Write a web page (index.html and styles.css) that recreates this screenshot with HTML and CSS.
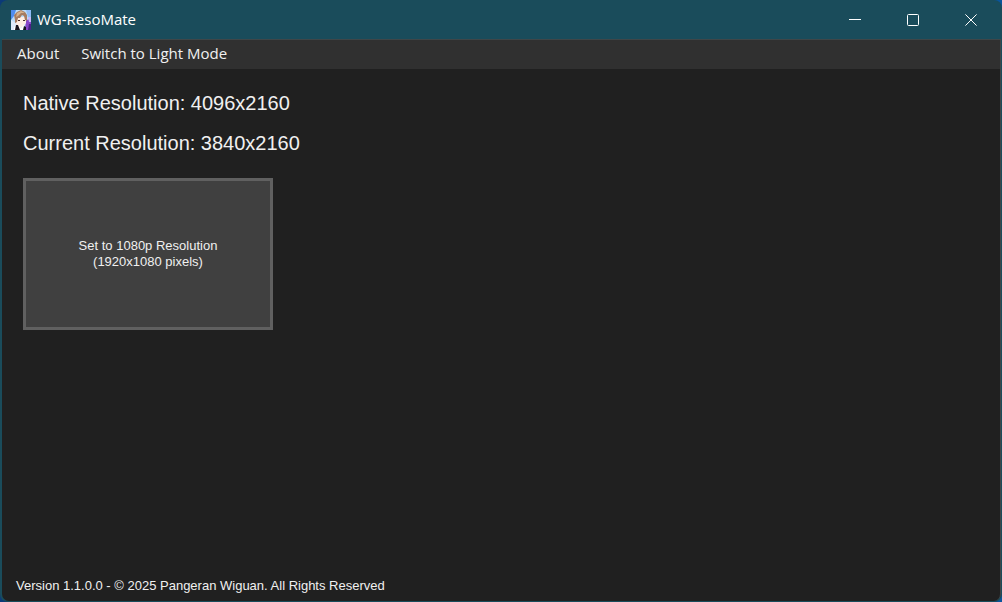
FILE: index.html
```html
<!DOCTYPE html>
<html lang="en">
<head>
<meta charset="utf-8">
<title>WG-ResoMate</title>
<link rel="stylesheet" href="styles.css">
</head>
<body>
<div class="window">
  <header class="titlebar">
    <svg class="app-icon" viewBox="0 0 20 20" aria-hidden="true">
      <rect width="20" height="20" fill="#b9dcfa"/>
      <path d="M0 0h5L3 6 0 10z" fill="#4f8df0"/>
      <path d="M15 0h5v9l-3-2z" fill="#8fbcf7"/>
      <path d="M0 10l5 3v7H0z" fill="#dceafb"/>
      <path d="M15 10l5-1v11h-6z" fill="#8a45c8"/>
      <path d="M17 7h3v5h-2z" fill="#c9b5f6"/>
      <path d="M18 14h2v6h-3z" fill="#4d2387"/>
      <path d="M5 7h10v6l-3 4-4 1-3-4z" fill="#ffeee4"/>
      <path d="M4 10L3 5l3-3 4-2 4 2 2 3v6l-2-1-1-4-2-1-2 3-2 0-1 4-2 1z" fill="#a67c60"/>
      <path d="M6 3l4-2 4 2-4 0-3 3-2 1z" fill="#d4b18d"/>
      <path d="M7 10h2v1H7zM12 10h2v1h-2z" fill="#4b3030"/>
      <path d="M3 17l4-2 3 3 3-3 2 5H3z" fill="#fff"/>
      <path d="M5 15l2 0 2 5H4zM13 16l2 1v3h-3z" fill="#15131d"/>
    </svg>
    <h1 class="title">WG-ResoMate</h1>
    <div class="window-controls">
      <button class="control" type="button" aria-label="Minimize">
        <svg class="glyph" viewBox="0 0 12 12"><path d="M0 5.5h12"/></svg>
      </button>
      <button class="control" type="button" aria-label="Maximize">
        <svg class="glyph" viewBox="0 0 12 12"><rect x=".5" y=".5" width="11" height="11" rx="1"/></svg>
      </button>
      <button class="control" type="button" aria-label="Close">
        <svg class="glyph" viewBox="0 0 12 12"><path d="M.4 .4l11.2 11.2M11.6 .4L.4 11.6"/></svg>
      </button>
    </div>
  </header>
  <div class="client">
    <nav class="menubar">
      <button class="menu-item" type="button">About</button>
      <button class="menu-item" type="button">Switch to Light Mode</button>
    </nav>
    <main class="content">
      <p class="resolution">Native Resolution: 4096x2160</p>
      <p class="resolution">Current Resolution: 3840x2160</p>
      <button class="set-button" type="button">Set to 1080p Resolution<br>(1920x1080 pixels)</button>
    </main>
    <footer class="status">Version 1.1.0.0 - © 2025 Pangeran Wiguan. All Rights Reserved</footer>
  </div>
</div>
</body>
</html>
```
FILE: styles.css
```css
* {
  box-sizing: border-box;
}

body {
  margin: 0;
  background: linear-gradient(90deg, #0b3a78, #0a559c);
  color: #f0f0f0;
  font-family: "Liberation Sans", Arial, sans-serif;
}

button {
  margin: 0;
  padding: 0;
  border: 0;
  background: none;
  color: inherit;
  font: inherit;
}

.window {
  display: flex;
  flex-direction: column;
  min-height: 100vh;
  padding: 0 1px 1px 2px;
  border-radius: 8px;
  overflow: hidden;
  background: #1a4c5b;
}

.titlebar {
  display: flex;
  align-items: center;
  height: 39px;
  padding-left: 9px;
  color: #fff;
}

.app-icon {
  width: 20px;
  height: 20px;
  margin-right: 6px;
}

.title {
  margin: 0;
  padding-bottom: 2px;
  font: 400 15px/20px "Open Sans", "Noto Sans", sans-serif;
}

.window-controls {
  display: flex;
  align-self: stretch;
  margin-left: auto;
  padding-right: 1px;
}

.control {
  display: flex;
  align-items: center;
  justify-content: center;
  width: 58px;
}

.glyph {
  width: 12px;
  height: 12px;
  fill: none;
  stroke: #fff;
  stroke-width: 1;
}

.client {
  display: flex;
  flex: 1;
  flex-direction: column;
  border-top: 1px solid #3f4648;
  border-right: 1px solid #3f4648;
  border-radius: 0 0 7px 7px;
  background: #202020;
}

.menubar {
  display: flex;
  align-items: flex-start;
  gap: 22px;
  height: 29px;
  padding: 0 15px;
  background: #303030;
  font: 15px/26px "Open Sans", "Noto Sans", sans-serif;
}

.content {
  display: flex;
  flex: 1;
  flex-direction: column;
  align-items: flex-start;
  padding: 22px 21px;
}

.resolution {
  margin: 0 0 16px;
  font-size: 20px;
  line-height: 24px;
}

.set-button {
  min-width: 250px;
  margin-top: 7px;
  padding: 57px 20px;
  border: 3px solid #606060;
  background: #404040;
  font-size: 13px;
  line-height: 16px;
}

.status {
  padding: 0 14px 7px;
  font-size: 13px;
  line-height: 16px;
}
```
